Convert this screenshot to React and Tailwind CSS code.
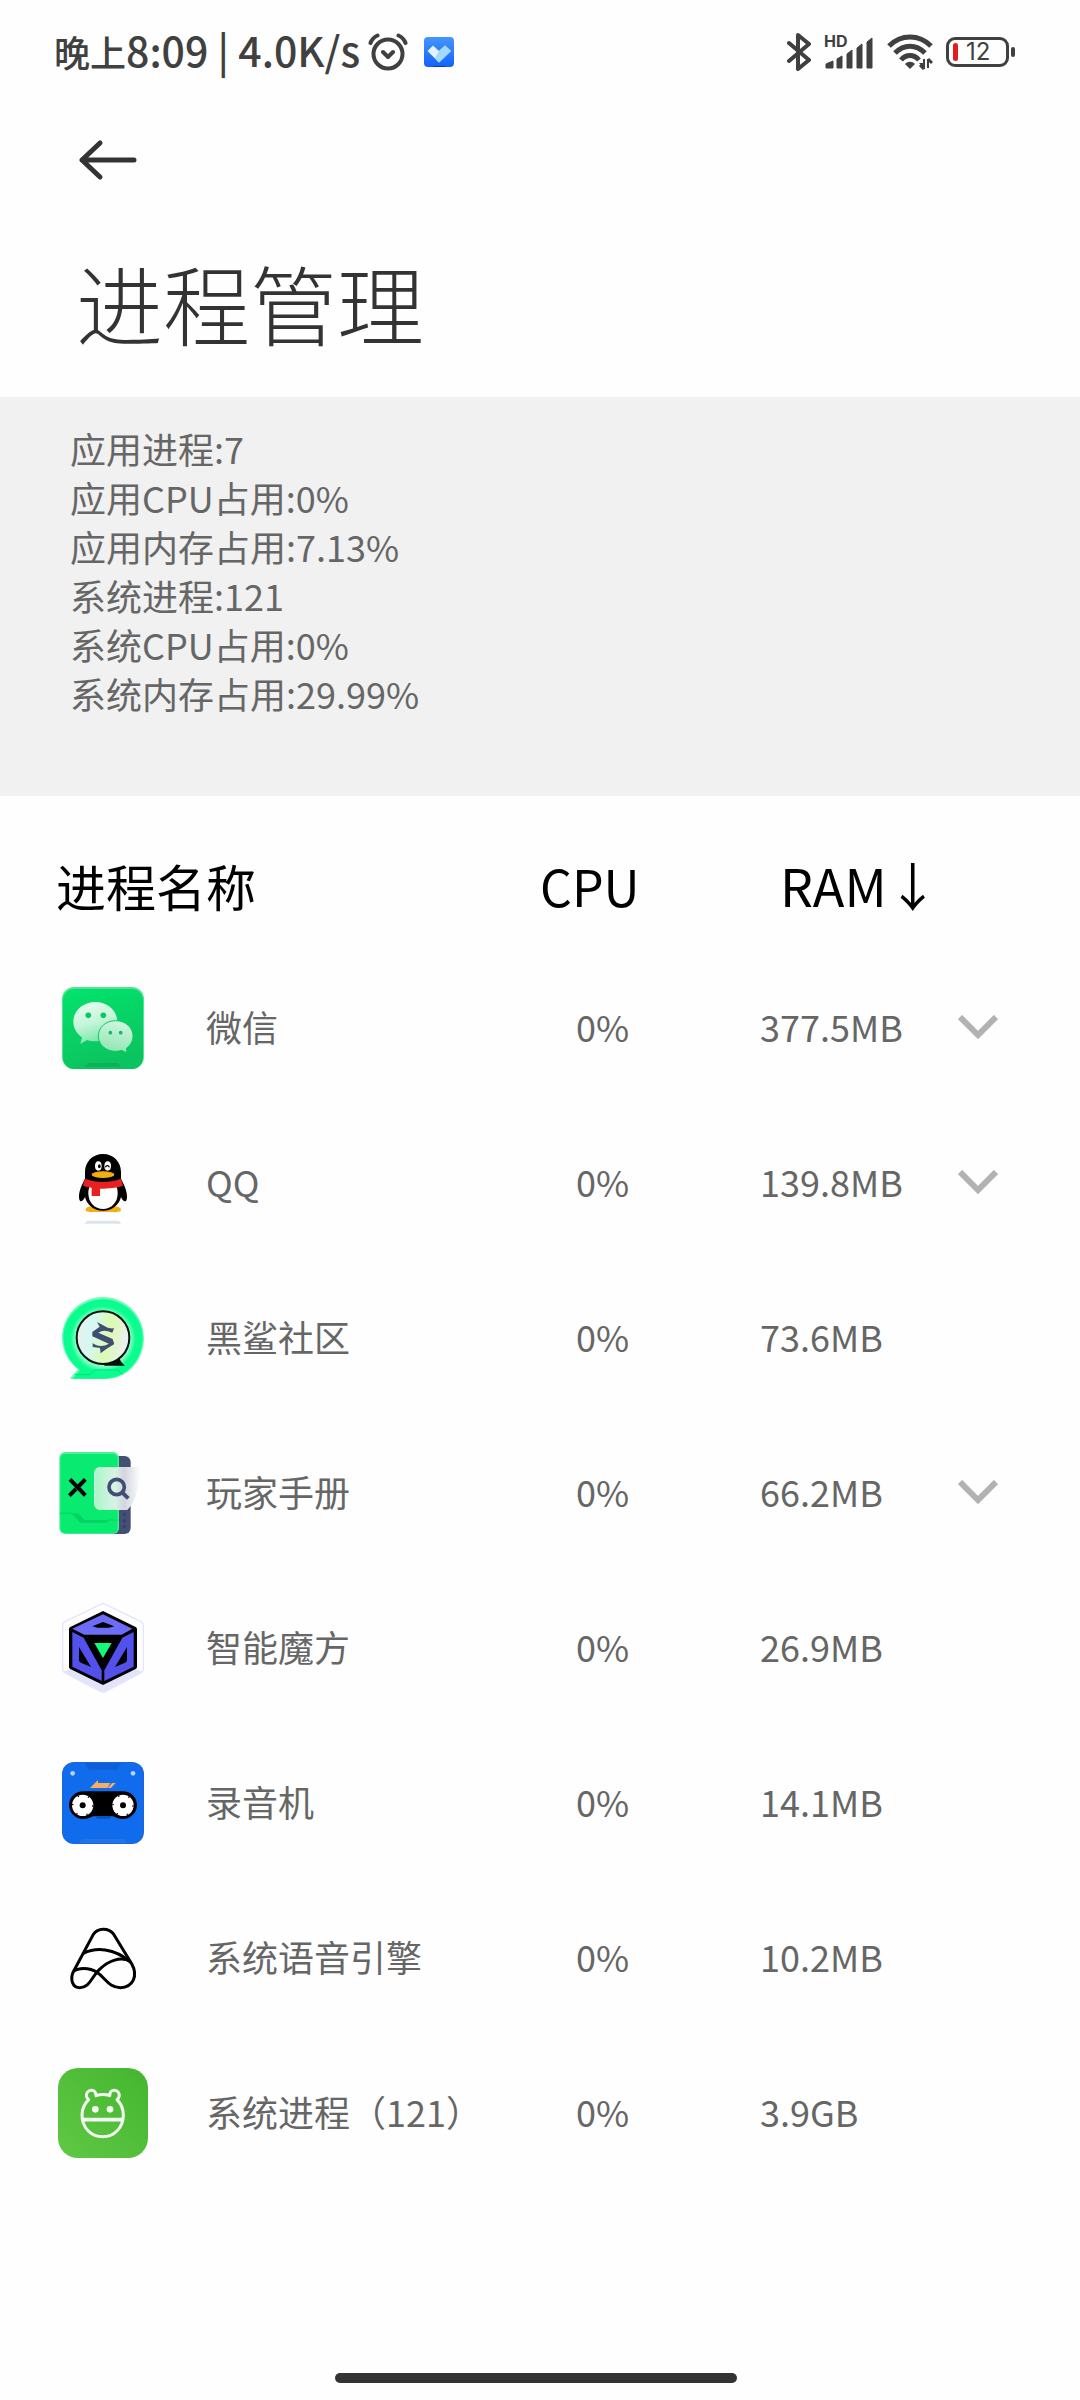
import React from 'react';

const summary = [
  '应用进程:7',
  '应用CPU占用:0%',
  '应用内存占用:7.13%',
  '系统进程:121',
  '系统CPU占用:0%',
  '系统内存占用:29.99%',
];

function WeChatIcon() {
  return (
    <svg viewBox="54 69 270 270" className="block size-[90px]" aria-hidden="true">
      <defs>
        <linearGradient id="wxBg" x1="0" y1="0" x2="0.3" y2="1">
          <stop offset="0" stopColor="#02e36c" />
          <stop offset="1" stopColor="#0cc45f" />
        </linearGradient>
        <linearGradient id="wxBubble" x1="0.3" y1="0" x2="0.6" y2="1">
          <stop offset="0" stopColor="#e6fcef" />
          <stop offset="0.5" stopColor="#c2f5d7" />
          <stop offset="1" stopColor="#6ee6a2" />
        </linearGradient>
        <linearGradient id="wxBubble2" x1="0.6" y1="0" x2="0.4" y2="1">
          <stop offset="0" stopColor="#d2f5e0" />
          <stop offset="1" stopColor="#8fe5b2" />
        </linearGradient>
      </defs>
      <rect x="66" y="81" width="246" height="246" rx="36" fill="#4fe596" />
      <rect x="69" y="87" width="240" height="240" rx="34" fill="url(#wxBg)" />
      <path d="M134 320l12-11h86l12 11z" fill="#09b257" />
      <path d="M166 126c37 0 66 26 66 59s-29 59-66 59c-9 0-17-1-25-4l-20 12 5-20c-16-11-26-28-26-47 0-33 29-59 66-59z" fill="url(#wxBubble)" />
      <circle cx="145" cy="166" r="8.500" fill="#08c862" />
      <circle cx="190" cy="166" r="8.500" fill="#08c862" />
      <path d="M227 182c29 0 52 20 52 46 0 15-8 28-20 37l2 14-16-8c-6 2-12 3-18 3-29 0-52-20-52-46s23-46 52-46z" fill="url(#wxBubble2)" stroke="#0acc64" strokeWidth="3" />
      <circle cx="211" cy="218" r="5.500" fill="#08c05e" />
      <circle cx="242" cy="218" r="5.500" fill="#08c05e" />
    </svg>
  );
}

function QQIcon() {
  return (
    <svg viewBox="54 534 270 270" className="block size-[90px]" aria-hidden="true">
      <path d="M134 791l8-9h94l8 9z" fill="#dbe3ed" />
      <path d="M137 750c0-10 14-12 26-12h52c14 0 28 3 28 12 0 6-16 6-28 6h-50c-14 0-28 0-28-6z" fill="#f3ae12" />
      <path d="M189 582c32 0 54 24 54 54v20c8 16 18 34 18 54 0 10-3 14-6 14-4 0-9-6-12-13-6 24-26 41-54 41s-48-17-54-41c-3 7-8 13-12 13-3 0-6-4-6-14 0-20 10-38 18-54v-20c0-30 22-54 54-54z" fill="#000" />
      <path d="M149 680h80c3 5 4 12 4 20 0 28-19 47-44 47s-44-19-44-47c0-8 1-15 4-20z" fill="#fffffd" />
      <path d="M135 656c36 13 72 13 108 0l6 21c-16 6-42 9-69 9v22h-25v-25c-9-1-18-3-26-6z" fill="#e8201f" />
      <ellipse cx="189" cy="644" rx="34" ry="10" fill="#f3ae12" />
      <path d="M155 642c22-8 46-8 68 0" stroke="#d08b0b" strokeWidth="1" fill="none" />
      <ellipse cx="175" cy="618" rx="10" ry="14" fill="#fff" />
      <ellipse cx="203" cy="618" rx="10" ry="14" fill="#fff" />
      <ellipse cx="178" cy="619" rx="4" ry="6" fill="#000" />
      <path d="M196 622c3-7 10-7 12 0" stroke="#000" strokeWidth="4" fill="none" />
    </svg>
  );
}

function SharkIcon() {
  return (
    <svg viewBox="54 69 270 270" className="block size-[90px]" aria-hidden="true">
      <defs>
        <linearGradient id="shark" x1="0" y1="0" x2="1" y2="0.2">
          <stop offset="0" stopColor="#eceef0" />
          <stop offset="0.35" stopColor="#d5f8f2" />
          <stop offset="0.68" stopColor="#dcfbb0" />
          <stop offset="1" stopColor="#eaf0ef" />
        </linearGradient>
        <radialGradient id="sharkRing">
          <stop offset="0.7" stopColor="#7dffc0" />
          <stop offset="0.82" stopColor="#0cfd90" />
          <stop offset="1" stopColor="#08fc8e" />
        </radialGradient>
      </defs>
      <path d="M189 81c68 0 123 55 123 123s-49 123-117 123H94c-4 0-3-4 0-7l20-22c-29-23-48-56-48-94 0-68 55-123 123-123z" fill="#6dfbb8" />
      <path d="M189 88c64 0 119 52 119 116s-47 120-113 122H98l22-26c-29-20-50-58-50-96 0-64 55-116 119-116z" fill="url(#sharkRing)" />
      <path d="M104 314h46l14-14h70l14 14" fill="none" stroke="#00df7b" strokeWidth="3" />
      <circle cx="189" cy="203" r="79" fill="url(#shark)" stroke="#06120d" strokeWidth="6" />
      <path d="M189 281c20 0 36-6 50-16 2 10 8 14 15 22h-60z" fill="#06120d" />
      <path d="M157 186l22-16-8-14 28 15c8 4 14 5 23 4l-5 13c-18-8-30-8-42 0l43 19 4 14-9 3-56-25z" fill="#414d73" />
      <path d="M158 220c14 10 34 10 48 1l16-4v6l-23 14-17 13-2-16-22-3z" fill="#414d73" />
    </svg>
  );
}

function HandbookIcon() {
  return (
    <svg viewBox="54 534 270 270" className="block size-[90px]" aria-hidden="true">
      <defs>
        <linearGradient id="glass" x1="0" y1="0" x2="1" y2="0">
          <stop offset="0" stopColor="#a9f6c8" />
          <stop offset="0.45" stopColor="#d8f3e4" />
          <stop offset="0.65" stopColor="#d3d5df" />
          <stop offset="1" stopColor="#ffffff" />
        </linearGradient>
      </defs>
      <rect x="190" y="558" width="82" height="234" rx="18" fill="#454f74" />
      <circle cx="253" cy="733" r="5" fill="#36406a" />
      <circle cx="253" cy="752" r="5" fill="#36406a" />
      <circle cx="253" cy="770" r="5" fill="#36406a" />
      <rect x="58" y="546" width="179" height="246" rx="18" fill="#4df098" />
      <rect x="61" y="552" width="172" height="238" rx="15" fill="#08ea70" />
      <path d="M59 730h38l24 26h80l7-6h28" fill="none" stroke="#04d464" strokeWidth="3" />
      <path d="M97 730h17l20 20h70l-7 9h-76z" fill="#04d464" />
      <path d="M90 628l46 48M136 628l-22 23M108 657l-20 20" stroke="#000" strokeWidth="12" />
      <path d="M182 591h120c-4 60-12 100-40 129h-80c-12 0-20-8-20-20v-89c0-12 8-20 20-20z" fill="url(#glass)" />
      <path d="M237 593h-55c-11 0-18 7-18 18v89c0 11 7 18 18 18h55" fill="none" stroke="#c9f9de" strokeWidth="3" />
      <circle cx="230" cy="651" r="23" fill="none" stroke="#434e75" strokeWidth="11" />
      <path d="M246 667l19 18" stroke="#434e75" strokeWidth="12" />
    </svg>
  );
}

function CubeIcon() {
  return (
    <svg viewBox="54 69 270 270" className="block size-[90px]" aria-hidden="true">
      <path d="M68 276l32-12h178l32 12-112 60c-6 3-12 3-18 0z" fill="#e4e3fc" />
      <path d="M182 73c5-3 9-3 14 0l107 52c5 3 7 6 7 11v132c0 5-2 8-7 11l-107 55c-5 3-9 3-14 0L75 279c-5-3-7-6-7-11V136c0-5 2-8 7-11z" fill="none" stroke="#e6e5fb" strokeWidth="4" />
      <path d="M189 93l98 48c3 2 4 4 4 7v112c0 3-1 5-4 7l-98 48-98-48c-3-2-4-4-4-7V148c0-3 1-5 4-7z" fill="#000" />
      <path d="M189 103l88 43-32 18H133l-36-18z" fill="#6d6cf6" />
      <path d="M97 156l34 17 54 98v32l-88-43z" fill="#5350ec" />
      <path d="M281 156l-34 17-54 98v32l88-43z" fill="#5350ec" />
      <path d="M157 139l32-13 34 13-16 4h-35z" fill="#000" />
      <path d="M117 201l36 60-30-13c-4-2-6-5-6-9zM261 201l-36 60 30-13c4-2 6-5 6-9z" fill="#000" />
      <path d="M163 189h52l-26 45z" fill="#10fb7a" />
    </svg>
  );
}

function RecorderIcon() {
  return (
    <svg viewBox="54 534 270 270" className="block size-[90px]" aria-hidden="true">
      <rect x="66" y="546" width="246" height="246" rx="36" fill="#1c64dc" />
      <rect x="69" y="549" width="240" height="240" rx="34" fill="#116ced" />
      <path d="M134 550h110l-14 19h-82z" fill="#0d5fd8" />
      <path d="M117 789l10-12h124l10 12z" fill="#2373e6" />
      <circle cx="98" cy="580" r="7" fill="#b7d2fb" />
      <circle cx="279" cy="580" r="7" fill="#b7d2fb" />
      <path d="M150 624l24-24v9h37l-9 15zM203 624l13-15h11l-14 15z" fill="#f6ae60" />
      <path d="M164 708h52l-8 8h-36z" fill="#0a50bd" />
      <path d="M130 634h118c24 0 43 18 43 41s-19 42-43 42c-18 0-24-9-33-9h-51c-9 0-15 9-34 9-24 0-43-19-43-42s19-41 43-41z" fill="#000" />
      <circle cx="128" cy="676" r="32" fill="#fff" />
      <circle cx="249" cy="676" r="32" fill="#fff" />
      <circle cx="128" cy="676" r="30" fill="none" stroke="#000" strokeWidth="4" strokeDasharray="4 27.400" />
      <circle cx="249" cy="676" r="30" fill="none" stroke="#000" strokeWidth="4" strokeDasharray="4 27.400" />
      <circle cx="128" cy="676" r="9" fill="#000" />
      <circle cx="249" cy="676" r="9" fill="#000" />
    </svg>
  );
}

function VoiceIcon() {
  return (
    <svg viewBox="54 39 270 270" className="block size-[90px]" aria-hidden="true">
      <g fill="none" stroke="#000" strokeWidth="9" strokeLinejoin="round" strokeLinecap="round">
        <path d="M100 215l60-112c14-20 44-20 60-2l55 90c20 36 4 72-34 72-34 0-44-28-70-46-24-16-58-14-71-2-10 22-4 48 20 48 30 0 34-34 62-58 24-22 58-36 88-22" />
        <path d="M130 160c36-18 92-18 142 27" />
      </g>
    </svg>
  );
}

function SystemIcon() {
  return (
    <svg viewBox="54 504 270 270" className="block size-[90px]" aria-hidden="true">
      <defs>
        <linearGradient id="sysBg" x1="1" y1="0" x2="0" y2="1">
          <stop offset="0" stopColor="#44b52f" />
          <stop offset="1" stopColor="#60c844" />
        </linearGradient>
      </defs>
      <rect x="54" y="504" width="270" height="270" rx="60" fill="url(#sysBg)" />
      <g fill="none" stroke="#f6fff3" strokeWidth="9" strokeLinejoin="round">
        <path d="M146 599c-7-6-9-15-4-22 7-9 21-8 25 3l1 7c14-5 28-5 41 0l1-7c4-11 18-12 25-3 5 7 3 16-4 22 12 12 19 28 19 46 0 39-28 65-62 65s-62-26-62-65c0-18 8-34 20-46z" />
        <path d="M127 659h123" strokeWidth="11" />
      </g>
      <circle cx="166" cy="628" r="10" fill="#f6fff3" />
      <circle cx="210" cy="628" r="10" fill="#f6fff3" />
    </svg>
  );
}

const processes = [
  { name: '微信', cpu: '0%', ram: '377.5MB', Icon: WeChatIcon, expandable: true },
  { name: 'QQ', cpu: '0%', ram: '139.8MB', Icon: QQIcon, expandable: true },
  { name: '黑鲨社区', cpu: '0%', ram: '73.6MB', Icon: SharkIcon },
  { name: '玩家手册', cpu: '0%', ram: '66.2MB', Icon: HandbookIcon, expandable: true },
  { name: '智能魔方', cpu: '0%', ram: '26.9MB', Icon: CubeIcon },
  { name: '录音机', cpu: '0%', ram: '14.1MB', Icon: RecorderIcon },
  { name: '系统语音引擎', cpu: '0%', ram: '10.2MB', Icon: VoiceIcon },
  { name: '系统进程（121）', cpu: '0%', ram: '3.9GB', Icon: SystemIcon },
];

function StatusBar() {
  return (
    <div className="flex h-[104px] items-center justify-between pl-[54px] pr-[65px] text-[#404040]">
      <div className="flex items-center">
        <p className="pb-1 text-[41px] font-medium leading-[60px]">
          <span className="text-[36px]">晚上</span>8:09 | 4.0K/s
        </p>

        {/* Alarm */}
        <svg viewBox="0 0 40 40" className="ml-2 size-10" fill="none" stroke="currentColor" strokeWidth="4" strokeLinecap="round" aria-hidden="true">
          <circle cx="20" cy="22" r="14.500" />
          <path d="M15 20l5 5 5-5M2.500 11C4 7 6 5 9.500 3.500M37.500 11C36 7 34 5 30.500 3.500" strokeLinejoin="round" />
        </svg>

        {/* Notification */}
        <svg viewBox="0 0 30 30" className="ml-4 size-[30px]" aria-hidden="true">
          <defs>
            <linearGradient id="note" x1="0" y1="0" x2="0" y2="1">
              <stop offset="0" stopColor="#4495fb" />
              <stop offset="1" stopColor="#1262fb" />
            </linearGradient>
          </defs>
          <rect width="30" height="30" rx="4" fill="url(#note)" />
          <path d="M9 8.500l6 5.500 6-5.500 6 5.500-12 11.500L3.500 14z" fill="#e2f3fe" />
          <path d="M15 14l6-5.500 6 5.500-12 11.500-4-4z" fill="#a3d9fd" />
          <path d="M9 29.500h12" stroke="#0b3db0" />
        </svg>
      </div>

      <div className="flex items-center gap-[13px]">
        <svg viewBox="0 0 24 40" className="h-10 w-6" fill="none" stroke="currentColor" strokeWidth="4" strokeLinejoin="round" strokeLinecap="round" aria-hidden="true">
          <path d="M2 11l20 17-11 9V3l11 9L2 29" />
        </svg>

        <svg viewBox="0 -6 50 48" className="h-12 w-[50px]" fill="currentColor" aria-hidden="true">
          <text x="0" y="13" fontSize="16" fontWeight="700" fontFamily="Inter, sans-serif">HD</text>
          <path d="M2 30l7-3v7H2zM13 25l5-3v12h-5zM23 20l5-4v18h-5zM33 14l5-4v24h-5zM43 8l5-4v30h-5z" stroke="currentColor" strokeLinejoin="round" />
        </svg>

        <svg viewBox="0 0 46 36" className="h-9 w-[46px]" fill="none" stroke="currentColor" strokeWidth="5" aria-hidden="true">
          <path d="M2 12c12-12 30-12 42 0M8 19c9-9 21-9 30 0M14 26c5-6 13-6 18 0" />
          <path d="M18 30c3-3 7-3 10 0l-5 5z" fill="currentColor" stroke="none" />
          <path d="M37 25v10M41 34V25" strokeWidth="2" />
          <path d="M32 29h5v6zM41 25v0l5 0-5 0z" fill="currentColor" stroke="none" />
          <path d="M33 31l4 4M45 29l-4-4" strokeWidth="3" />
        </svg>

        {/* Battery */}
        <div className="flex items-center gap-0.5">
          <div className="flex h-[30px] w-[63px] items-center gap-2 rounded-[9px] border-3 border-current pl-1">
            <span className="h-[18px] w-[5px] rounded-sm bg-[#e31b1b]" />
            <span className="font-[Inter] text-2xl leading-6">12</span>
          </div>
          <span className="h-[10px] w-1 rounded-full bg-current" />
        </div>
      </div>
    </div>
  );
}

export default function App() {
  return (
    <div className="flex min-h-screen flex-col bg-[#fefefe] font-['Noto_Sans_CJK_SC',sans-serif]">
      <StatusBar />

      <header className="px-[76px] pb-[43px] pt-7 text-[#333333]">
        <button type="button" aria-label="返回" className="flex h-14 w-16 items-center">
          <svg viewBox="0 0 64 44" className="h-11 w-16" fill="none" stroke="currentColor" strokeWidth="5" strokeLinecap="round" strokeLinejoin="round" aria-hidden="true">
            <path d="M58 22H6M24 5L6 22l18 17" />
          </svg>
        </button>
        <h1 className="mt-[62px] text-[87px] font-light leading-[104px]">进程管理</h1>
      </header>

      <section className="bg-[#f1f1f1] px-[70px] pb-[78px] pt-[27px] text-[36px] leading-[49px] text-[#666666]">
        {summary.map(line => (
          <p key={line}>{line}</p>
        ))}
      </section>

      <table className="w-full table-fixed text-left text-[36px] leading-[52px] text-[#666666]">
        <thead className="text-[50px] leading-[72px] text-black">
          <tr className="h-[154px]">
            <th className="w-1/2 pl-14 pt-6 font-normal">进程名称</th>
            <th className="w-[220px] pt-6 font-normal">CPU</th>
            <th className="w-[190px] pl-5 pt-6 font-normal">
              <button type="button" className="whitespace-nowrap text-[52px]">RAM↓</button>
            </th>
            <th aria-label="展开" />
          </tr>
        </thead>
        <tbody>
          {processes.map(({ name, cpu, ram, Icon, expandable }) => (
            <tr key={name} className="h-[155px]">
              <td className="pl-[58px]">
                <div className="flex items-center gap-[58px]">
                  <Icon />
                  <span className="pb-1">{name}</span>
                </div>
              </td>
              <td className="pb-1 pl-9">{cpu}</td>
              <td className="pb-1">{ram}</td>
              <td>
                {expandable && (
                  <button type="button" aria-label={`展开${name}`} className="flex h-14 w-14 items-center justify-center">
                    <svg viewBox="0 0 40 26" className="h-[26px] w-10" fill="none" stroke="#b2b2b2" strokeWidth="6" aria-hidden="true">
                      <path d="M2 2l18 18L38 2" />
                    </svg>
                  </button>
                )}
              </td>
            </tr>
          ))}
        </tbody>
      </table>

      {/* Gesture bar */}
      <div className="mt-auto flex justify-center pb-[17px] pr-2">
        <div className="h-[10px] w-3/8 rounded-full bg-[#333333]" />
      </div>
    </div>
  );
}
